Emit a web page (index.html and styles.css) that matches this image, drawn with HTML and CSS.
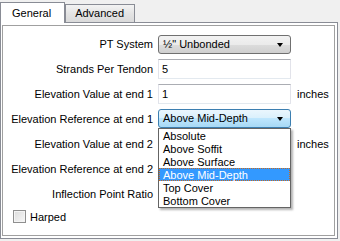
FILE: index.html
```html
<!DOCTYPE html>
<html lang="en">
<head>
    <meta charset="UTF-8">
    <title>Tendon Properties</title>
    <link rel="stylesheet" href="styles.css">
</head>
<body>
    <div class="tabs">
        <div class="tab active">General</div>
        <div class="tab">Advanced</div>
    </div>
    <div class="panel">
        <div class="frame">
            <div class="form">
                <div class="label">PT System</div>
                <div class="select">½" Unbonded<span class="arrow"></span></div>
                <div></div>

                <div class="label">Strands Per Tendon</div>
                <div class="input">5</div>
                <div></div>

                <div class="label">Elevation Value at end 1</div>
                <div class="input">1</div>
                <div class="unit">inches</div>

                <div class="label">Elevation Reference at end 1</div>
                <div class="drop">
                    <div class="select open">Above Mid-Depth<span class="arrow"></span></div>
                    <ul class="list">
                        <li>Absolute</li>
                        <li>Above Soffit</li>
                        <li>Above Surface</li>
                        <li class="selected">Above Mid-Depth</li>
                        <li>Top Cover</li>
                        <li>Bottom Cover</li>
                    </ul>
                </div>
                <div></div>

                <!-- these fields sit under the open list -->
                <div class="label">Elevation Value at end 2</div>
                <div class="input"></div>
                <div class="unit">inches</div>

                <div class="label">Elevation Reference at end 2</div>
                <div class="select"></div>
                <div></div>

                <div class="label">Inflection Point Ratio</div>
                <div class="input"></div>
                <div></div>
            </div>
            <label class="check"><span class="box"></span>Harped</label>
        </div>
    </div>
</body>
</html>
```

FILE: styles.css
```css
body {
    margin: 0;
    background-color: #f0f0f0;
    font-family: "Liberation Sans", Arial, sans-serif;
    font-size: 11px;
    color: #000000;
}
.tabs {
    display: flex;
    align-items: flex-end;
    height: 22px;
}
.tab {
    height: 17px;
    line-height: 17px;
    padding: 0 10px 0 9px;
    border: 1px solid #898c95;
    border-bottom: none;
    background: linear-gradient(#f3f3f3, #e4e4e4 50%, #dadada);
}
.tab.active {
    position: relative;
    z-index: 1;
    height: 20px;
    line-height: 20px;
    margin-bottom: -1px;
    padding: 0 13px 0 11px;
    background: #ffffff;
}
.panel {
    height: 215px;
    width: 336px;
    background-color: #ffffff;
    border: 1px solid #898c95;
}
.frame {
    height: 201px;
    margin: 2px 2px 0 1px;
    padding-top: 8px;
    border: 1px solid #a0a0a0;
}
.form {
    display: grid;
    grid-template-columns: 150px 133px auto;
    grid-auto-rows: 20px;
    column-gap: 5px;
    row-gap: 5px;
    align-items: center;
}
.label {
    text-align: right;
    white-space: nowrap;
}
.unit {
    padding-left: 1px;
}
.input {
    box-sizing: border-box;
    height: 20px;
    line-height: 18px;
    padding-left: 3px;
    border: 1px solid #e2e3ea;
    border-top-color: #abadb3;
    border-bottom-color: #e3e9ef;
    background: #ffffff;
}
.select {
    position: relative;
    box-sizing: border-box;
    height: 19px;
    line-height: 17px;
    padding-left: 4px;
    border: 1px solid #707070;
    border-radius: 3px;
    background: linear-gradient(#f2f2f2, #ebebeb 50%, #dddddd 50%, #cfcfcf);
}
.select.open {
    border-color: #3c7fb1;
    background: linear-gradient(#eaf6fd, #d9f0fc 50%, #bee6fd 50%, #a7d9f5);
}
.arrow {
    position: absolute;
    right: 7px;
    top: 7px;
    border-top: 4px solid #000000;
    border-left: 3px solid transparent;
    border-right: 3px solid transparent;
}
.drop {
    position: relative;
    height: 20px;
}
.list {
    position: absolute;
    z-index: 2;
    top: 19px;
    left: 0;
    width: 131px;
    margin: 0;
    padding: 0;
    list-style: none;
    background: #ffffff;
    border: 1px solid #646464;
    box-shadow: 2px 2px 2px rgba(0, 0, 0, 0.3);
}
.list li {
    box-sizing: border-box;
    height: 13px;
    line-height: 13px;
    padding-left: 3px;
    border: 1px solid transparent;
}
.list li.selected {
    background-color: #3399ff;
    color: #ffffff;
    border: 1px dotted #c86a1e;
}
.check {
    display: flex;
    align-items: center;
    gap: 4px;
    margin: 6px 0 0 10px;
    height: 13px;
}
.box {
    box-sizing: border-box;
    width: 13px;
    height: 13px;
    border: 1px solid #8f8f8f;
    background: linear-gradient(135deg, #dcdcdc, #f7f7f7);
    box-shadow: inset 0 0 0 1px #f4f4f4;
}
```
